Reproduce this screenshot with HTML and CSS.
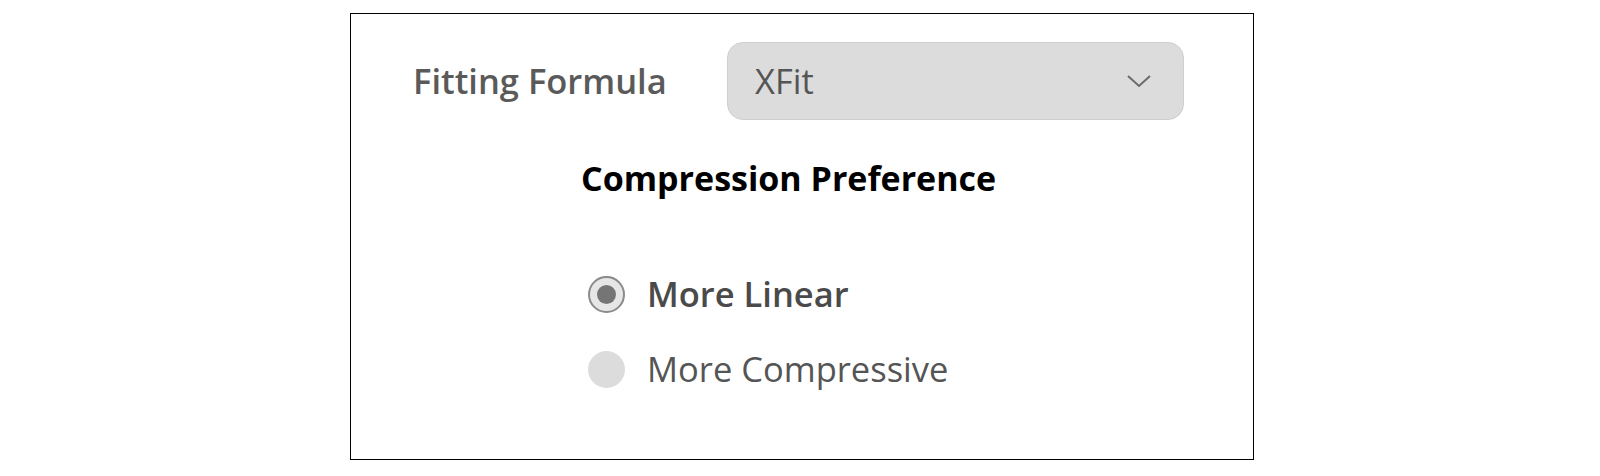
FILE: index.html
```html
<!DOCTYPE html>
<html>
<head>
<meta charset="utf-8">
<link rel="stylesheet" href="styles.css">
</head>
<body>
<div class="panel">
  <div class="field-row">
    <span class="field-label">Fitting Formula</span>
    <div class="select">
      <span class="select-value">XFit</span>
      <svg class="chevron" width="26" height="16" viewBox="0 0 26 16"><path d="M2 3 L13 13 L24 3" fill="none" stroke="#6a6a6a" stroke-width="2"/></svg>
    </div>
  </div>
  <div class="pref">
    <div class="pref-title">Compression Preference</div>
    <div class="radios">
      <label class="radio-row checked"><span class="radio"><span class="dot"></span></span><span class="radio-text">More Linear</span></label>
      <label class="radio-row disabled"><span class="radio"></span><span class="radio-text">More Compressive</span></label>
    </div>
  </div>
</div>
</body>
</html>
```
FILE: styles.css
```css
html, body {
  margin: 0;
  padding: 0;
  background: #fff;
}
body {
  font-family: "Open Sans", "Noto Sans", sans-serif;
  padding: 13px 0 0 350px;
}
.panel {
  width: 902px;
  height: 445px;
  border: 1.5px solid #000;
  box-sizing: content-box;
}
.field-row {
  display: flex;
  align-items: center;
  padding: 28px 0 0 62px;
}
.field-label {
  font-size: 34.5px;
  font-weight: 600;
  color: #5a5a5a;
  width: 314px;
  line-height: 48px;
}
.select {
  width: 457px;
  height: 78px;
  box-sizing: border-box;
  background: #dcdcdc;
  border: 1px solid #cfcfcf;
  border-radius: 16px;
  display: flex;
  align-items: center;
  justify-content: space-between;
  padding: 0 31px 0 27px;
}
.select-value {
  font-size: 34.5px;
  color: #555;
  line-height: 48px;
}
.chevron {
  display: block;
}
.pref {
  padding: 34px 0 0 230px;
}
.pref-title {
  font-size: 34px;
  font-weight: 700;
  color: #000;
  line-height: 48px;
}
.radios {
  padding-top: 68px;
  display: flex;
  flex-direction: column;
  gap: 27px;
}
.radio-row {
  display: flex;
  align-items: center;
  padding-left: 7px;
  height: 48px;
}
.radio {
  width: 37px;
  height: 37px;
  border-radius: 50%;
  box-sizing: border-box;
  display: flex;
  align-items: center;
  justify-content: center;
  margin-right: 22px;
}
.checked .radio {
  border: 2px solid #8a8a8a;
  background: #e6e6e6;
}
.dot {
  width: 19px;
  height: 19px;
  border-radius: 50%;
  background: #757575;
}
.disabled .radio {
  background: #dcdcdc;
}
.radio-text {
  font-size: 34.5px;
  color: #555;
  line-height: 48px;
}
.checked .radio-text {
  font-weight: 600;
  color: #4a4a4a;
}
```
